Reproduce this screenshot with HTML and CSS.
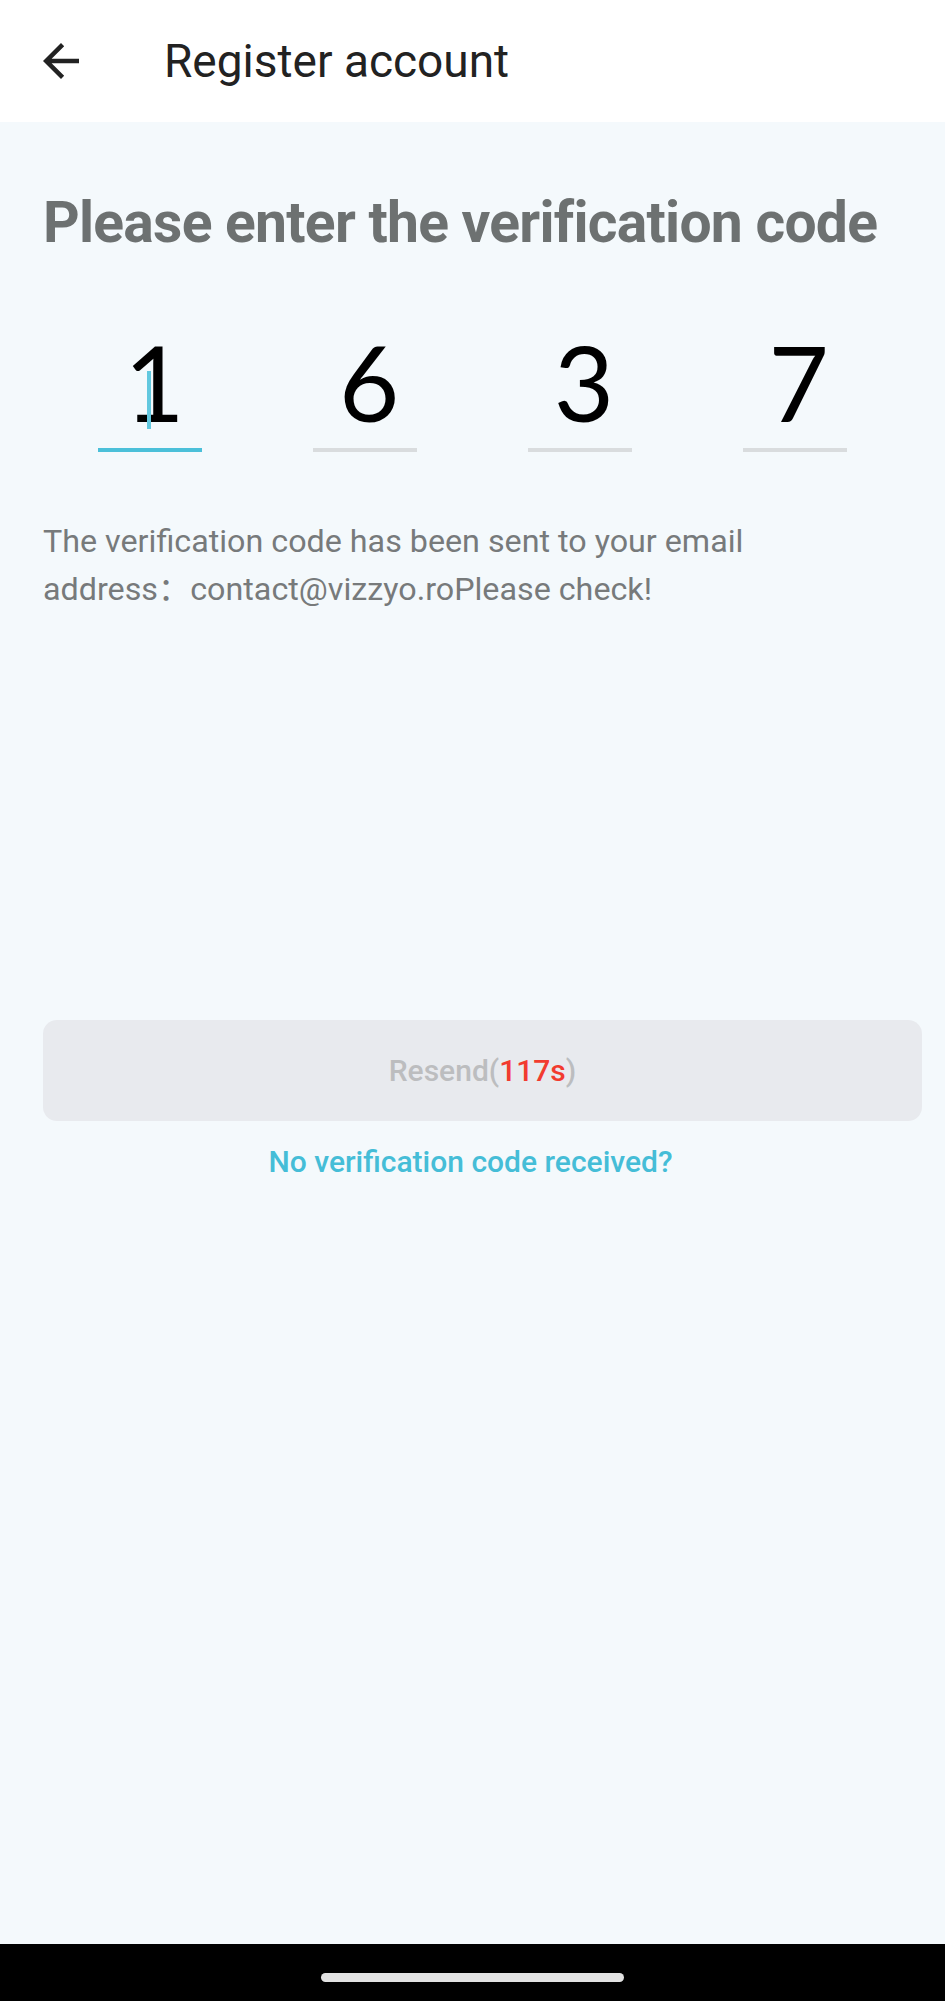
FILE: index.html
```html
<!DOCTYPE html>
<html lang="en">
<head>
<meta charset="utf-8">
<title>Register account</title>
<link rel="stylesheet" href="styles.css">
</head>
<body>
<div class="screen">
  <header class="appbar">
    <button class="back" aria-label="Back">
      <svg viewBox="0 0 24 24" width="54" height="54"><path d="M20 11H7.83l5.59-5.59L12 4l-8 8 8 8 1.41-1.41L7.83 13H20v-2z" fill="#222"/></svg>
    </button>
    <h1 class="appbar-title">Register account</h1>
  </header>
  <main class="content">
    <h2 class="heading">Please enter the verification code</h2>
    <div class="code-row">
      <div class="cell"><div class="digit active">1<span class="cursor"></span></div></div>
      <div class="cell"><div class="digit">6</div></div>
      <div class="cell"><div class="digit">3</div></div>
      <div class="cell"><div class="digit">7</div></div>
    </div>
    <p class="note">The verification code has been sent to your email<br>address<span class="colon">：</span>contact@vizzyo.roPlease check!</p>
    <button class="resend">Resend(<span class="count">117s</span>)</button>
    <a class="help" href="#">No verification code received?</a>
  </main>
  <div class="navbar"><span class="pill"></span></div>
</div>
</body>
</html>
```
FILE: styles.css
```css
* { box-sizing: border-box; }
html, body { margin: 0; padding: 0; }
body {
  font-family: Roboto, "Noto Sans", sans-serif;
  background: #f4f9fc;
}
.screen {
  height: 2001px;
  display: flex;
  flex-direction: column;
}
.appbar {
  height: 122px;
  background: #ffffff;
  display: flex;
  align-items: center;
  flex: none;
}
.back {
  border: 0;
  background: none;
  padding: 0;
  margin-left: 34px;
  width: 54px;
  height: 54px;
  display: flex;
}
.appbar-title {
  margin: 0 0 0 76px;
  font-size: 46px;
  font-weight: 400;
  color: #222222;
}
.content {
  flex: 1;
  display: flex;
  flex-direction: column;
  padding: 0 43px;
}
.heading {
  margin: 67px 0 0;
  font-size: 57px;
  letter-spacing: -0.75px;
  line-height: 68px;
  font-weight: 700;
  color: #6d7171;
  white-space: nowrap;
}
.code-row {
  margin-top: 59px;
  display: grid;
  grid-template-columns: repeat(4, 1fr);
}
.cell {
  display: flex;
  justify-content: center;
}
.digit {
  position: relative;
  width: 104px;
  height: 136px;
  font-family: Lato, "DejaVu Sans", sans-serif;
  font-size: 104px;
  line-height: 132px;
  text-align: center;
  color: #000;
  border-bottom: 4px solid #d9dcde;
  padding-left: 8px;
}
.digit.active { border-bottom-color: #4bc0d9; }
.cursor {
  position: absolute;
  left: 49px;
  top: 55px;
  width: 4px;
  height: 58px;
  background: #62c8df;
}
.note {
  margin: 67px 0 0;
  font-size: 32.25px;
  line-height: 45px;
  color: #777a7b;
}
.colon {
  font-family: "Noto Sans CJK SC", sans-serif;
}
.resend {
  margin: 408px -20px 0 0;
  height: 101px;
  border: 0;
  border-radius: 14px;
  background: #e8eaee;
  font-family: Roboto, sans-serif;
  font-size: 30px;
  font-weight: 500;
  color: #bcbdbf;
}
.count { color: #f23b2f; }
.help {
  margin-top: 21px;
  align-self: center;
  margin-left: -4px;
  font-size: 30px;
  line-height: 40px;
  font-weight: 500;
  color: #45bdd7;
  text-decoration: none;
}
.navbar {
  height: 57px;
  flex: none;
  background: #000;
  display: flex;
  justify-content: center;
  padding-top: 29px;
}
.pill {
  width: 303px;
  height: 9px;
  border-radius: 5px;
  background: #e2e2e2;
}
```
